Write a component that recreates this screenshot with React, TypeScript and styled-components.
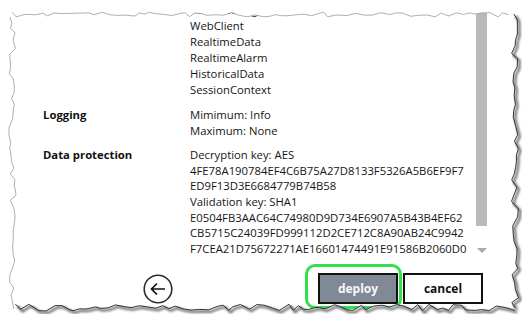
import React from 'react'
import styled, { createGlobalStyle } from 'styled-components'

const GlobalStyle = createGlobalStyle`
  html, body {
    margin: 0;
    padding: 0;
    background: #fff;
  }
  body {
    font-family: "Open Sans", "Noto Sans", "Liberation Sans", sans-serif;
    font-size: 11.3px;
    color: #151515;
  }
`

const Page = styled.div`
  position: relative;
  width: 530px;
  height: 324px;
  overflow: hidden;
  background: #fff;
  display: flex;
  flex-direction: column;
`
const Body = styled.div`
  display: flex;
  height: 262px;
  padding-left: 43px;
`
const Details = styled.div`
  flex: 1;
  min-width: 0;
  overflow: hidden;
  padding-top: 2px;
`
const Row = styled.div`
  display: grid;
  grid-template-columns: 147px 1fr;
  margin-bottom: 9px;
`
const Label = styled.div`
  font-weight: 700;
  line-height: 16px;
  color: #111;
`
const Values = styled.div`
  display: flex;
  flex-direction: column;
`
const Line = styled.div<{ $tight?: boolean }>`
  line-height: ${props => (props.$tight ? '15.6px' : '16px')};
  white-space: nowrap;
`
const Scrollbar = styled.div`
  width: 11px;
  margin: 12px 43px 0 0;
  display: flex;
  flex-direction: column;
  align-items: center;
`
const Thumb = styled.div`
  width: 11px;
  height: 214px;
  background: #b9b9b9;
`
const ArrowDown = styled.div`
  margin-top: 22px;
  width: 0;
  height: 0;
  border-left: 5px solid transparent;
  border-right: 5px solid transparent;
  border-top: 5px solid #a9a9a9;
`
const Footer = styled.div`
  display: flex;
  justify-content: space-between;
  align-items: center;
  padding: 11px 47px 0 143px;
`
const BackButton = styled.button`
  width: 30px;
  height: 30px;
  padding: 0;
  border: none;
  background: none;
  cursor: pointer;
  display: flex;
`
const Buttons = styled.div`
  display: flex;
  gap: 5px;
`
const ActionButton = styled.button<{ $primary?: boolean }>`
  position: relative;
  width: 80px;
  height: 31px;
  border: 2px solid #111;
  background: ${props => (props.$primary ? '#7f8a96' : '#fff')};
  color: ${props => (props.$primary ? '#f6f7f9' : '#111')};
  font-family: "Open Sans", "Noto Sans", "Liberation Sans", sans-serif;
  font-size: 12px;
  font-weight: 700;
  padding: 0;
  cursor: pointer;
`
const FocusRing = styled.span`
  position: absolute;
  left: -15px;
  right: -6px;
  top: -11px;
  bottom: -7px;
  border: 3px solid #33e04c;
  border-radius: 10px;
  pointer-events: none;
`
const Torn = styled.svg`
  position: absolute;
  left: 0;
  top: 0;
  pointer-events: none;
`

function rng(seed: number) {
  let a = seed
  return () => {
    a |= 0
    a = (a + 0x6d2b79f5) | 0
    let t = Math.imul(a ^ (a >>> 15), 1 | a)
    t = (t + Math.imul(t ^ (t >>> 7), 61 | t)) ^ t
    return ((t ^ (t >>> 14)) >>> 0) / 4294967296
  }
}

function buildEdges() {
  const r = rng(7)
  const top: number[][] = []
  const right: number[][] = []
  const bottom: number[][] = []
  const left: number[][] = []
  for (let x = 12; x < 515; x += 4 + r() * 5) top.push([x, 12 + r() * 5])
  for (let y = 14; y < 309; y += 4 + r() * 5) right.push([511 + r() * 8, y])
  for (let x = 515; x > 12; x -= 4 + r() * 6) bottom.push([x, 304 + r() * 7])
  for (let y = 309; y > 14; y -= 4 + r() * 5) left.push([9 + r() * 7, y])
  return { top, right, bottom, left }
}

const pts = (a: number[][]) => a.map(p => `${p[0].toFixed(1)},${p[1].toFixed(1)}`).join(' ')

const TornEdges = () => {
  const { top, right, bottom, left } = buildEdges()
  const all = [...top, ...right, ...bottom, ...left]
  const poly = 'M' + all.map(p => `${p[0].toFixed(1)} ${p[1].toFixed(1)}`).join(' L') + ' Z'
  const shadowR = right.map(p => [p[0] + 2, p[1] + 2])
  const shadowB = bottom.map(p => [p[0] + 2, p[1] + 2])
  return (
    <Torn width="530" height="324" viewBox="0 0 530 324">
      <defs>
        <filter id="blur" x="-10%" y="-10%" width="120%" height="120%">
          <feGaussianBlur stdDeviation="1.2" />
        </filter>
      </defs>
      <path d={`M0 0H530V324H0Z ${poly}`} fill="#fff" fillRule="evenodd" />
      <polyline points={pts(shadowR)} fill="none" stroke="#777" strokeWidth="2.5" filter="url(#blur)" />
      <polyline points={pts(shadowB)} fill="none" stroke="#777" strokeWidth="2.5" filter="url(#blur)" />
      <polyline points={pts(top)} fill="none" stroke="#9a9a9a" strokeWidth="0.8" />
      <polyline points={pts(left)} fill="none" stroke="#9a9a9a" strokeWidth="0.8" />
      <polyline points={pts(right)} fill="none" stroke="#222" strokeWidth="0.9" />
      <polyline points={pts(bottom)} fill="none" stroke="#222" strokeWidth="0.9" />
    </Torn>
  )
}

const BackIcon = () => (
  <svg width="30" height="30" viewBox="0 0 30 30">
    <circle cx="15" cy="15" r="13.8" fill="none" stroke="#2b2b2b" strokeWidth="1.6" />
    <path d="M22 15H8.5M14 9.5L8.5 15L14 20.5" fill="none" stroke="#111" strokeWidth="1.7" />
  </svg>
)

const services = ['ServerConfiguration', 'WebClient', 'RealtimeData', 'RealtimeAlarm', 'HistoricalData', 'SessionContext']
const protection = [
  'Decryption key: AES',
  '4FE78A190784EF4C6B75A27D8133F5326A5B6EF9F7',
  'ED9F13D3E6684779B74B58',
  'Validation key: SHA1',
  'E0504FB3AAC64C74980D9D734E6907A5B43B4EF62',
  'CB5715C24039FD999112D2CE712C8A90AB24C9942',
  'F7CEA21D75672271AE16601474491E91586B2060D0',
]

export default function App() {
  return (
    <>
      <GlobalStyle />
      <Page>
        <Body>
          <Details>
            <Row>
              <Label />
              <Values>
                {services.map(s => <Line key={s}>{s}</Line>)}
              </Values>
            </Row>
            <Row>
              <Label>Logging</Label>
              <Values>
                <Line $tight>Mimimum: Info</Line>
                <Line $tight>Maximum: None</Line>
              </Values>
            </Row>
            <Row>
              <Label>Data protection</Label>
              <Values>
                {protection.map(s => <Line $tight key={s}>{s}</Line>)}
              </Values>
            </Row>
          </Details>
          <Scrollbar>
            <Thumb />
            <ArrowDown />
          </Scrollbar>
        </Body>
        <Footer>
          <BackButton aria-label="back">
            <BackIcon />
          </BackButton>
          <Buttons>
            <ActionButton $primary>
              deploy
              <FocusRing />
            </ActionButton>
            <ActionButton>cancel</ActionButton>
          </Buttons>
        </Footer>
        <TornEdges />
      </Page>
    </>
  )
}
